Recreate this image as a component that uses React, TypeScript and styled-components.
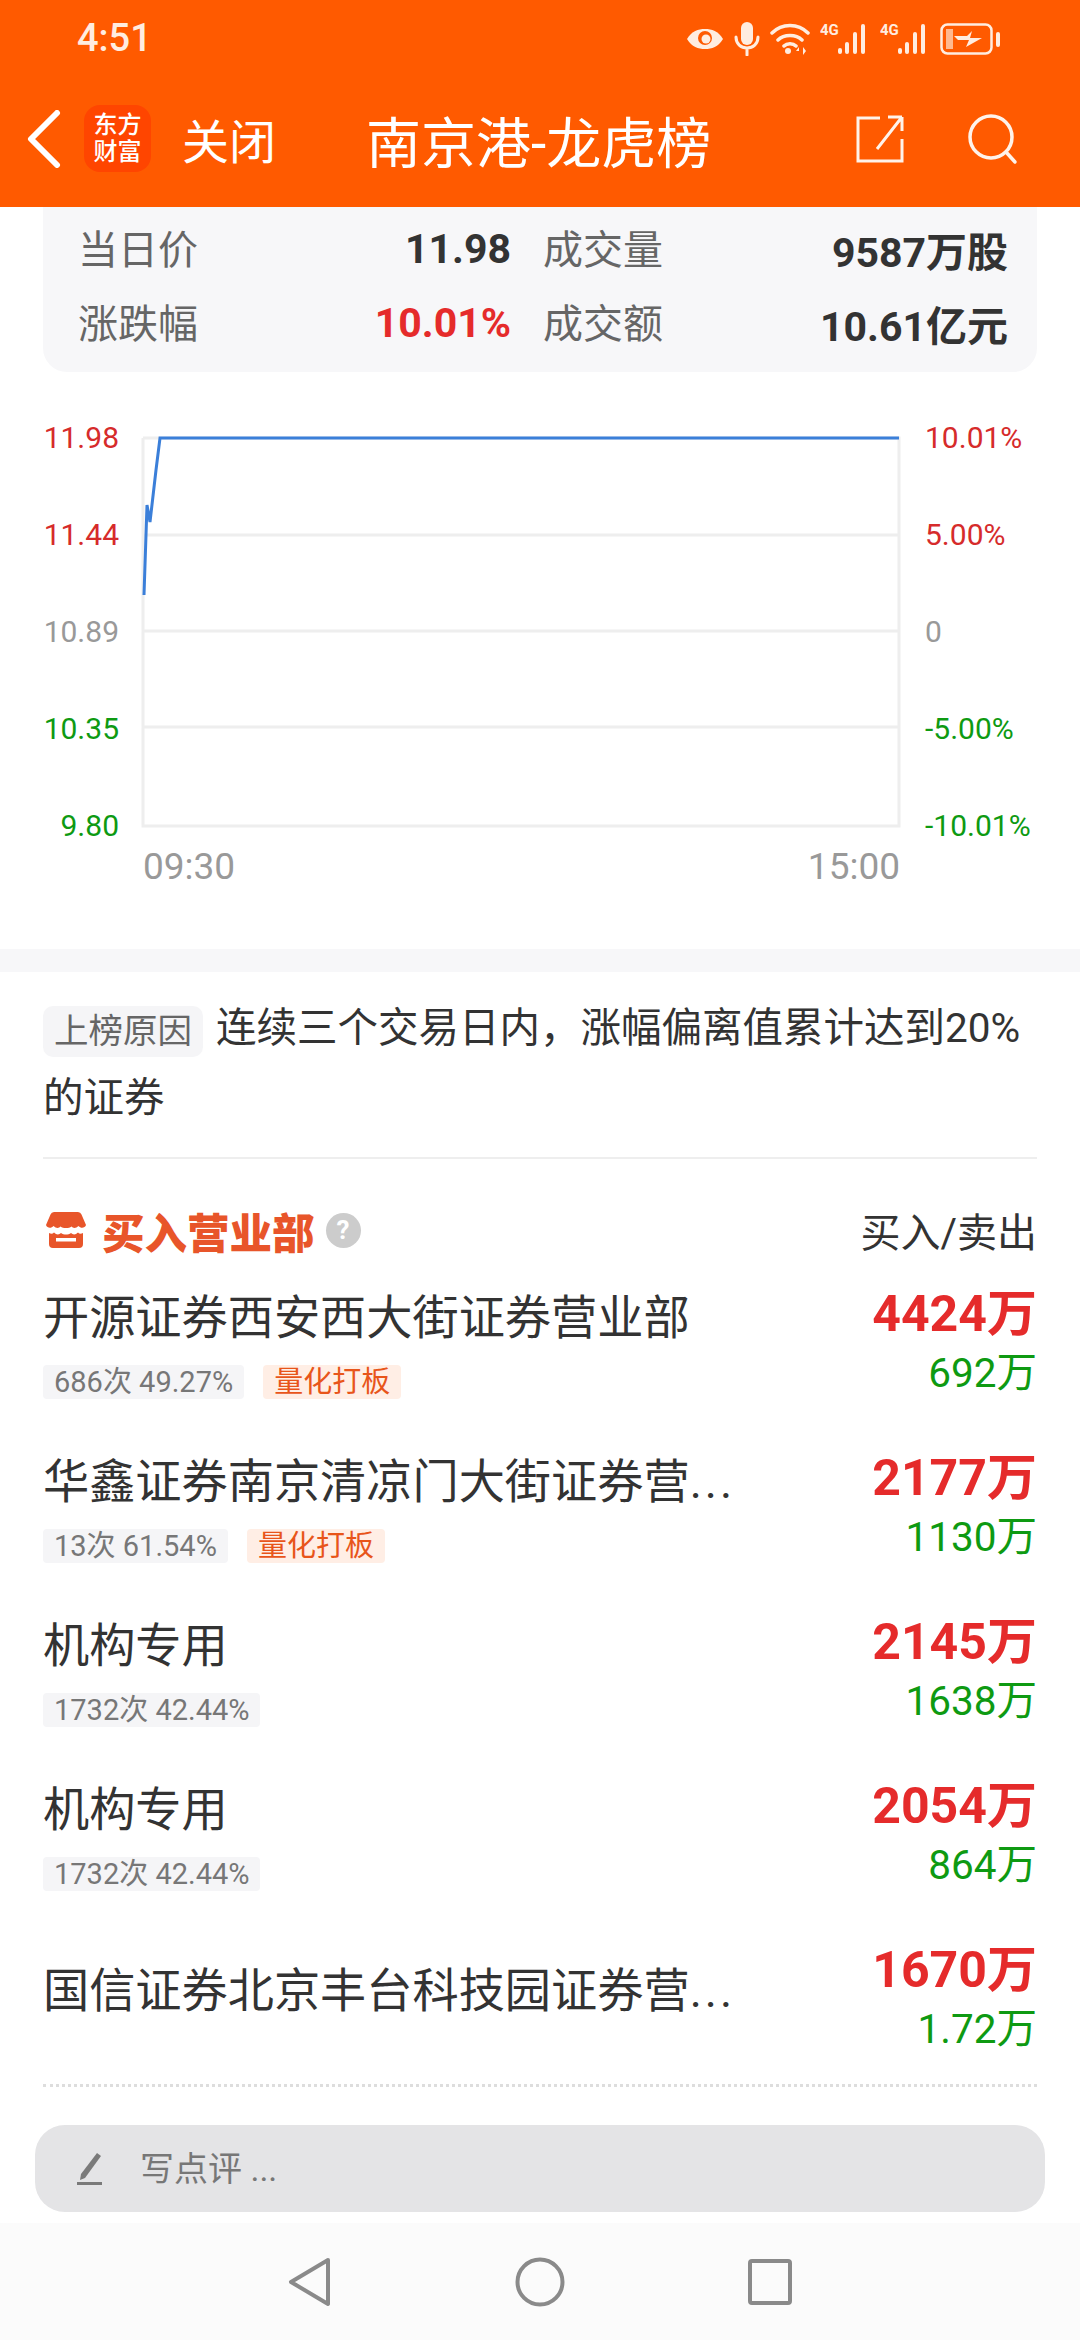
import React from "react"
import styled, { createGlobalStyle } from "styled-components"

const FONT = `Roboto, "Noto Sans CJK SC", sans-serif`
const RED = "#E52B2B"
const GREEN = "#0E9A12"

const GlobalStyle = createGlobalStyle`
  html, body { margin: 0; padding: 0; background: #fff; }
  body { font-family: ${FONT}; color: #333; }
  * { box-sizing: border-box; }
`

interface Seat {
  name: string
  more?: boolean
  stat?: string
  tag?: boolean
  buy: string
  sell: string
}

const seats: Seat[] = [
  { name: "开源证券西安西大街证券营业部", stat: "686次 49.27%", tag: true, buy: "4424万", sell: "692万" },
  { name: "华鑫证券南京清凉门大街证券营", more: true, stat: "13次 61.54%", tag: true, buy: "2177万", sell: "1130万" },
  { name: "机构专用", stat: "1732次 42.44%", buy: "2145万", sell: "1638万" },
  { name: "机构专用", stat: "1732次 42.44%", buy: "2054万", sell: "864万" },
  { name: "国信证券北京丰台科技园证券营", more: true, buy: "1670万", sell: "1.72万" },
]

const leftAxis = [
  { text: "11.98", color: "#D62B2B" },
  { text: "11.44", color: "#D62B2B" },
  { text: "10.89", color: "#999" },
  { text: "10.35", color: GREEN },
  { text: "9.80", color: GREEN },
]

const rightAxis = [
  { text: "10.01%", color: "#D62B2B" },
  { text: "5.00%", color: "#D62B2B" },
  { text: "0", color: "#999" },
  { text: "-5.00%", color: GREEN },
  { text: "-10.01%", color: GREEN },
]

const SignalIcon = () => (
  <svg width="50" height="34" viewBox="0 0 50 34">
    <text x="0" y="13" fontSize="15" fontWeight="700" fill="#FFEDE0" fontFamily="Roboto, sans-serif">4G</text>
    <g fill="#FFEDE0">
      <rect x="18" y="26" width="4" height="6" rx="2" />
      <rect x="25" y="20" width="4" height="12" rx="2" />
      <rect x="33" y="10" width="4" height="22" rx="2" />
      <rect x="41" y="2" width="4" height="30" rx="2" />
    </g>
  </svg>
)

const StatusIcons = () => (
  <StatusIconRow>
    <svg width="38" height="22" viewBox="0 0 38 22">
      <path d="M1 11C6 3 12 1 19 1s13 2 18 10c-5 8-11 10-18 10S6 19 1 11z" fill="#FFEDE0" />
      <circle cx="19" cy="10" r="7" fill="#FF5A00" />
      <circle cx="20" cy="11" r="4.5" fill="#FFEDE0" />
    </svg>
    <svg width="26" height="34" viewBox="0 0 26 34" fill="none">
      <rect x="7" y="0" width="12" height="23" rx="6" fill="#FFEDE0" />
      <path d="M2 15c0 7 5 11 11 11s11-4 11-11M13 26v7" stroke="#FFEDE0" strokeWidth="3" strokeLinecap="round" />
    </svg>
    <svg width="40" height="32" viewBox="0 0 40 32" fill="none">
      <path d="M2 10c10-10 26-10 36 0M8 17c6-6 18-6 24 0M14 23c3-3 9-3 12 0" stroke="#FFEDE0" strokeWidth="3.5" strokeLinecap="round" />
      <circle cx="18" cy="28" r="3" fill="#FFEDE0" />
      <path d="M29 24l-3 4h3zM33 24v8l3-4z" fill="#FFEDE0" />
    </svg>
    <SignalIcon />
    <SignalIcon />
    <svg width="62" height="32" viewBox="0 0 62 32" fill="none">
      <rect x="1.5" y="1.5" width="50" height="29" rx="6" stroke="#FFEDE0" strokeWidth="2.5" />
      <rect x="6" y="6" width="7" height="20" fill="#FFB98F" />
      <path d="M14 13h13l5-5-2 7h12l-16 9 3-7H18z" fill="#FFEDE0" />
      <rect x="56" y="9" width="4" height="15" rx="2" fill="#FFEDE0" />
    </svg>
  </StatusIconRow>
)

const BackIcon = () => (
  <svg width="34" height="58" viewBox="0 0 34 58" fill="none">
    <path d="M30 3L4 29l26 26" stroke="#fff" strokeWidth="6" strokeLinecap="round" strokeLinejoin="round" />
  </svg>
)

const ShareIcon = () => (
  <svg width="48" height="48" viewBox="0 0 48 48" fill="none">
    <path d="M24 3H2v43h44V24M46 2L21 34M46 2v14M46 2H32" stroke="#FFF3EA" strokeWidth="3" />
  </svg>
)

const SearchIcon = () => (
  <svg width="52" height="52" viewBox="0 0 52 52" fill="none">
    <circle cx="25" cy="24" r="21" stroke="#FFF3EA" strokeWidth="3.5" />
    <path d="M40 39l9 10" stroke="#FFF3EA" strokeWidth="3.5" strokeLinecap="round" />
  </svg>
)

const PriceChart = () => (
  <svg width="760" height="394" viewBox="0 0 760 394" fill="none">
    <path d="M2 2V390H758V2H2M2 99H758M2 195H758M2 291H758" stroke="#EEEEEE" strokeWidth="3" />
    <path d="M3 159L6 69L9 86L15 34L19 2H758" stroke="#3B7FD9" strokeWidth="3" />
  </svg>
)

const ShopIcon = () => (
  <svg width="40" height="36" viewBox="0 0 40 36">
    <path d="M8 0H32a4 4 0 0 1 3.500 2.500L40 13c-1 3-5 4-7.500 1-2.500 2.500-5.500 2.500-7 .5-2.500 2-8.500 2-11 0-1.500 2-4.500 2-7-.5C5 17 1 16 0 13L4.500 2.500A4 4 0 0 1 8 0z" fill="#E8552A" />
    <path d="M3 21c2 1 3.500 1 5-.5 2.500 2.500 5 2.500 7 .5 3 2 7 2 10 0 2 2 4.500 2 7-.5 1.500 1.500 3 1.500 5 .5V32a4 4 0 0 1-4 4H7a4 4 0 0 1-4-4z" fill="#E8552A" />
    <rect x="10" y="26" width="20" height="3.500" fill="#fff" />
  </svg>
)

const PenIcon = () => (
  <svg width="26" height="34" viewBox="0 0 26 34">
    <path d="M20 1l4 3L8 26l-5 2 1-6z" fill="#7A7A7A" />
    <rect x="0" y="30" width="25" height="3" fill="#7A7A7A" />
  </svg>
)

const App: React.FC = () => (
  <Page>
    <GlobalStyle />
    <Header>
      <StatusBar>
        <Clock>4:51</Clock>
        <StatusIcons />
      </StatusBar>
      <NavBar>
        <BackButton><BackIcon /></BackButton>
        <Logo>
          <span>东方</span>
          <span>财富</span>
        </Logo>
        <CloseLabel>关闭</CloseLabel>
        <Title>南京港-龙虎榜</Title>
        <NavActions>
          <ShareIcon />
          <SearchIcon />
        </NavActions>
      </NavBar>
    </Header>

    <Content>
      <StatCard>
        <StatPair>
          <StatLabel>当日价</StatLabel>
          <StatValue>11.98</StatValue>
        </StatPair>
        <StatPair>
          <StatLabel>成交量</StatLabel>
          <StatValue>9587万股</StatValue>
        </StatPair>
        <StatPair>
          <StatLabel>涨跌幅</StatLabel>
          <StatValue $color={RED}>10.01%</StatValue>
        </StatPair>
        <StatPair>
          <StatLabel>成交额</StatLabel>
          <StatValue>10.61亿元</StatValue>
        </StatPair>
      </StatCard>

      <ChartBlock>
        <ChartRow>
          <LeftAxis>
            {leftAxis.map((a) => (
              <AxisLabel key={a.text} $color={a.color}>{a.text}</AxisLabel>
            ))}
          </LeftAxis>
          <PlotArea><PriceChart /></PlotArea>
          <RightAxis>
            {rightAxis.map((a) => (
              <AxisLabel key={a.text} $color={a.color}>{a.text}</AxisLabel>
            ))}
          </RightAxis>
        </ChartRow>
        <TimeRow>
          <span>09:30</span>
          <span>15:00</span>
        </TimeRow>
      </ChartBlock>

      <Band />

      <Reason>
        <ReasonTag>上榜原因</ReasonTag>
        <span>连续三个交易日内，涨幅偏离值累计达到20%的证券</span>
      </Reason>

      <SectionHead>
        <SectionTitle>
          <ShopIcon />
          <SectionName>买入营业部</SectionName>
          <HelpBadge>?</HelpBadge>
        </SectionTitle>
        <SectionRight>买入/卖出</SectionRight>
      </SectionHead>

      <SeatList>
        {seats.map((s, i) => (
          <SeatRow key={i} $last={!s.stat}>
            <SeatMain $centered={!s.stat}>
              <SeatName>
                {s.name}
                {s.more && <Dots>...</Dots>}
              </SeatName>
              {s.stat && (
                <SeatTags>
                  <StatTag>{s.stat}</StatTag>
                  {s.tag && <QuantTag>量化打板</QuantTag>}
                </SeatTags>
              )}
            </SeatMain>
            <SeatAmounts>
              <BuyAmount>{s.buy}</BuyAmount>
              <SellAmount>{s.sell}</SellAmount>
            </SeatAmounts>
          </SeatRow>
        ))}
      </SeatList>

      <CommentBar>
        <PenIcon />
        <CommentText>写点评 ...</CommentText>
      </CommentBar>
    </Content>

    <SystemNav>
      <svg width="44" height="50" viewBox="0 0 44 50" fill="none">
        <path d="M40 3L3 25l37 22z" stroke="#8A8A8A" strokeWidth="4" strokeLinejoin="round" />
      </svg>
      <svg width="50" height="50" viewBox="0 0 50 50" fill="none">
        <circle cx="25" cy="25" r="22.5" stroke="#8A8A8A" strokeWidth="4" />
      </svg>
      <svg width="44" height="46" viewBox="0 0 44 46" fill="none">
        <rect x="2" y="2" width="40" height="42" rx="2" stroke="#8A8A8A" strokeWidth="4" />
      </svg>
    </SystemNav>
  </Page>
)

export default App

const Page = styled.div`
  width: 1080px;
  height: 2340px;
  display: flex;
  flex-direction: column;
  overflow: hidden;
  background: #fff;
`
const Header = styled.header`
  height: 207px;
  flex: none;
  background: #ff5a00;
  color: #fff;
`
const StatusBar = styled.div`
  height: 76px;
  display: flex;
  align-items: center;
  justify-content: space-between;
  padding: 0 78px 0 77px;
`
const Clock = styled.span`
  font-size: 38px;
  font-weight: 500;
  color: #ffede0;
`
const StatusIconRow = styled.div`
  display: flex;
  align-items: center;
  gap: 10px;
  margin-top: 2px;
`
const NavBar = styled.div`
  height: 125px;
  display: flex;
  align-items: center;
  padding: 0 62px 0 27px;
`
const BackButton = styled.div`
  display: flex;
  margin-right: 23px;
`
const Logo = styled.div`
  width: 67px;
  height: 67px;
  border-radius: 16px;
  background: #ff4500;
  display: flex;
  flex-direction: column;
  align-items: center;
  justify-content: center;
  font-size: 24px;
  line-height: 27px;
  font-weight: 500;
  color: #fff;
`
const CloseLabel = styled.span`
  margin-left: 31px;
  font-size: 47px;
`
const Title = styled.h1`
  margin: 0 0 0 90px;
  font-size: 55px;
  font-weight: 400;
`
const NavActions = styled.div`
  margin-left: auto;
  display: flex;
  align-items: center;
  gap: 62px;
`
const Content = styled.main`
  flex: 1;
  min-height: 0;
  display: flex;
  flex-direction: column;
`
const StatCard = styled.section`
  flex: none;
  height: 165px;
  margin: 0 43px;
  padding: 5px 28px 0 35px;
  background: #f7f7f9;
  border-radius: 0 0 24px 24px;
  display: grid;
  grid-template-columns: 433px 465px;
  grid-auto-rows: 74px;
  column-gap: 32px;
`
const StatPair = styled.div`
  display: flex;
  align-items: center;
  justify-content: space-between;
`
const StatLabel = styled.span`
  padding-bottom: 4px;
  font-size: 40px;
  color: #666;
`
const StatValue = styled.span<{ $color?: string }>`
  font-size: 41px;
  font-weight: 700;
  color: ${(p) => p.$color || "#333"};
`
const ChartBlock = styled.section`
  flex: none;
  height: 577px;
  padding: 44px 0 0 43px;
`
const ChartRow = styled.div`
  display: flex;
  height: 432px;
`
const LeftAxis = styled.div`
  width: 76px;
  margin-right: 22px;
  display: flex;
  flex-direction: column;
  justify-content: space-between;
  align-items: flex-end;
`
const RightAxis = styled(LeftAxis)`
  width: auto;
  margin: 0 0 0 24px;
  align-items: flex-start;
`
const AxisLabel = styled.span<{ $color: string }>`
  font-size: 30px;
  line-height: 44px;
  color: ${(p) => p.$color};
`
const PlotArea = styled.div`
  padding-top: 20px;
  width: 760px;
`
const TimeRow = styled.div`
  width: 757px;
  margin: -3px 0 0 100px;
  display: flex;
  justify-content: space-between;
  font-size: 37px;
  line-height: 44px;
  color: #999;
`
const Band = styled.div`
  flex: none;
  height: 23px;
  background: #f7f7f9;
`
const Reason = styled.section`
  flex: none;
  margin: 0 43px;
  padding: 21px 0 24px;
  border-bottom: 2px solid #eeeeee;
  font-size: 40.5px;
  line-height: 70px;
  color: #333;
`
const ReasonTag = styled.span`
  display: inline-block;
  height: 51px;
  padding: 0 11px;
  margin-right: 13px;
  border-radius: 10px;
  background: #f5f5f7;
  font-size: 34.5px;
  line-height: 51px;
  color: #666;
  vertical-align: middle;
`
const SectionHead = styled.div`
  flex: none;
  height: 60px;
  margin: 41px 43px 0 46px;
  display: flex;
  align-items: center;
  justify-content: space-between;
`
const SectionTitle = styled.div`
  display: flex;
  align-items: center;
`
const SectionName = styled.span`
  margin-left: 16px;
  font-size: 42.5px;
  font-weight: 900;
  color: #e8552a;
`
const HelpBadge = styled.span`
  width: 35px;
  height: 35px;
  margin-left: 11px;
  border-radius: 50%;
  background: #cccccc;
  color: #fff;
  font-size: 26px;
  font-weight: 700;
  line-height: 35px;
  text-align: center;
`
const SectionRight = styled.span`
  font-size: 40px;
  color: #333;
`
const SeatList = styled.div`
  flex: none;
  margin: 21px 43px 0;
  border-bottom: 3px dotted #dddddd;
`
const SeatRow = styled.div<{ $last: boolean }>`
  height: ${(p) => (p.$last ? 147 : 164)}px;
  display: flex;
  justify-content: space-between;
  align-items: flex-start;
`
const SeatMain = styled.div<{ $centered: boolean }>`
  padding-top: ${(p) => (p.$centered ? 0 : 4)}px;
  height: ${(p) => (p.$centered ? "108px" : "auto")};
  display: flex;
  flex-direction: column;
  justify-content: ${(p) => (p.$centered ? "center" : "flex-start")};
  min-width: 0;
`
const SeatName = styled.div`
  font-size: 46.2px;
  line-height: 66px;
  color: #333;
  white-space: nowrap;
`
const Dots = styled.span`
  letter-spacing: 3px;
`
const SeatTags = styled.div`
  margin-top: 14px;
  display: flex;
  gap: 19px;
`
const StatTag = styled.span`
  height: 34px;
  padding: 0 11px;
  border-radius: 4px;
  background: #f5f5f7;
  font-size: 29px;
  line-height: 34px;
  color: #777;
`
const QuantTag = styled(StatTag)`
  background: #ffeee5;
  color: #e8551a;
`
const SeatAmounts = styled.div`
  display: flex;
  flex-direction: column;
  align-items: flex-end;
`
const BuyAmount = styled.div`
  font-size: 50px;
  font-weight: 700;
  line-height: 66px;
  color: ${RED};
`
const SellAmount = styled.div`
  font-size: 40.5px;
  line-height: 52px;
  color: ${GREEN};
`
const CommentBar = styled.div`
  flex: none;
  height: 87px;
  margin: 38px 35px 0;
  padding-left: 42px;
  border-radius: 30px;
  background: #e4e4e6;
  display: flex;
  align-items: center;
  gap: 37px;
`
const CommentText = styled.span`
  padding-bottom: 4px;
  font-size: 34px;
  color: #777;
`
const SystemNav = styled.nav`
  flex: none;
  height: 117px;
  padding: 0 288px;
  background: #fbfbfb;
  display: flex;
  align-items: center;
  justify-content: space-between;
`
